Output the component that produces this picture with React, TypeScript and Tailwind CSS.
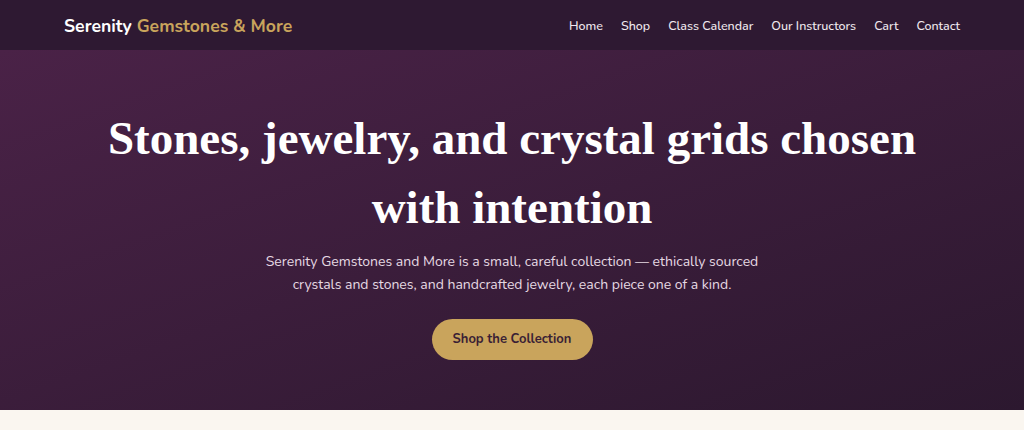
import React from "react";

const NAV_LINKS = ["Home", "Shop", "Class Calendar", "Our Instructors", "Cart", "Contact"];

export default function App() {
    return (
        <div className="min-h-[430px] bg-[#faf6f0] font-['Nunito','Lato',sans-serif]">
            {/* Header */}
            <header className="bg-[#2e1932]">
                <div className="flex h-[50px] items-center justify-between px-16 pt-[3px]">
                    <a className="text-[17.6px] font-bold text-white">
                        Serenity <span className="text-[#c9a45c]">Gemstones &amp; More</span>
                    </a>
                    <nav className="flex items-center gap-[18px] text-[12.5px] font-medium text-[#f1e9ef]">
                        {NAV_LINKS.map((link) => (
                            <a key={link}>{link}</a>
                        ))}
                    </nav>
                </div>
            </header>

            {/* Hero */}
            <section className="flex h-[360px] flex-col items-center bg-gradient-to-br from-[#4a2247] to-[#2c182f] pt-[54px] text-center">
                <h1 className="max-w-[900px] font-['Liberation_Serif',serif] text-[47px] leading-[69px] font-bold text-white">
                    Stones, jewelry, and crystal grids chosen with intention
                </h1>
                <p className="mt-[8px] max-w-[500px] text-[14px] leading-[23px] text-[#e6d9e3]">
                    Serenity Gemstones and More is a small, careful collection — ethically sourced crystals and
                    stones, and handcrafted jewelry, each piece one of a kind.
                </p>
                <button className="mt-[23px] h-[41px] w-[161px] rounded-full bg-[#c9a45c] text-[13px] font-bold text-[#3a1f35]">
                    Shop the Collection
                </button>
            </section>
        </div>
    );
}
